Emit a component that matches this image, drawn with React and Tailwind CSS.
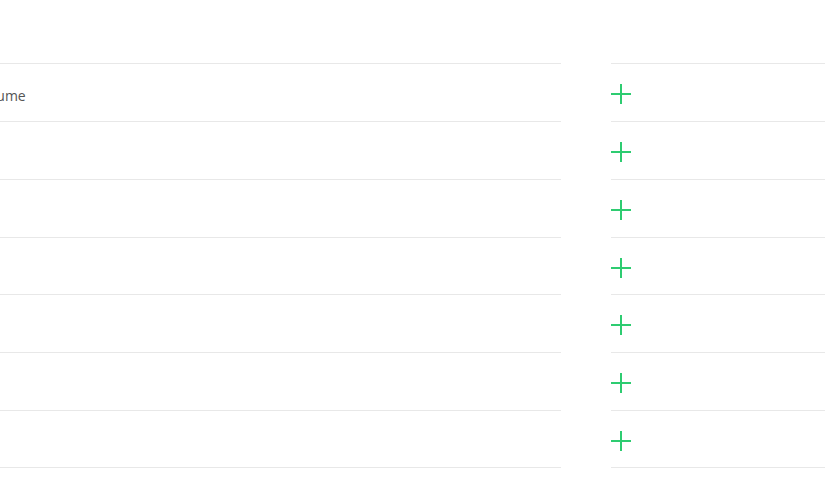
const rows = ["Volume", "", "", "", "", "", ""];

function Plus() {
  return (
    <svg width="20" height="20" viewBox="0 0 20 20" className="block">
      <path d="M10 0V20M0 10H20" stroke="#2ecc71" strokeWidth="2" />
    </svg>
  );
}

export default function App() {
  return (
    <div
      className="w-[825px] h-[492px] bg-white overflow-hidden flex pt-[63px]"
      style={{ fontFamily: '"Open Sans", sans-serif' }}
    >
      <div className="w-[561px] shrink-0 overflow-hidden">
        {rows.map((label, i) => (
          <div
            key={i}
            className="h-[57.86px] border-t border-[#e8e8e8] last:border-b flex items-center pt-[6px]"
          >
            <span className="-ml-[24px] text-[14px] text-[#555] whitespace-nowrap">
              {label}
            </span>
          </div>
        ))}
      </div>
      <div className="ml-[50px] flex-1">
        {rows.map((_, i) => (
          <div
            key={i}
            className="h-[57.86px] border-t border-[#e8e8e8] last:border-b flex items-center pt-[3px]"
          >
            <Plus />
          </div>
        ))}
      </div>
    </div>
  );
}
